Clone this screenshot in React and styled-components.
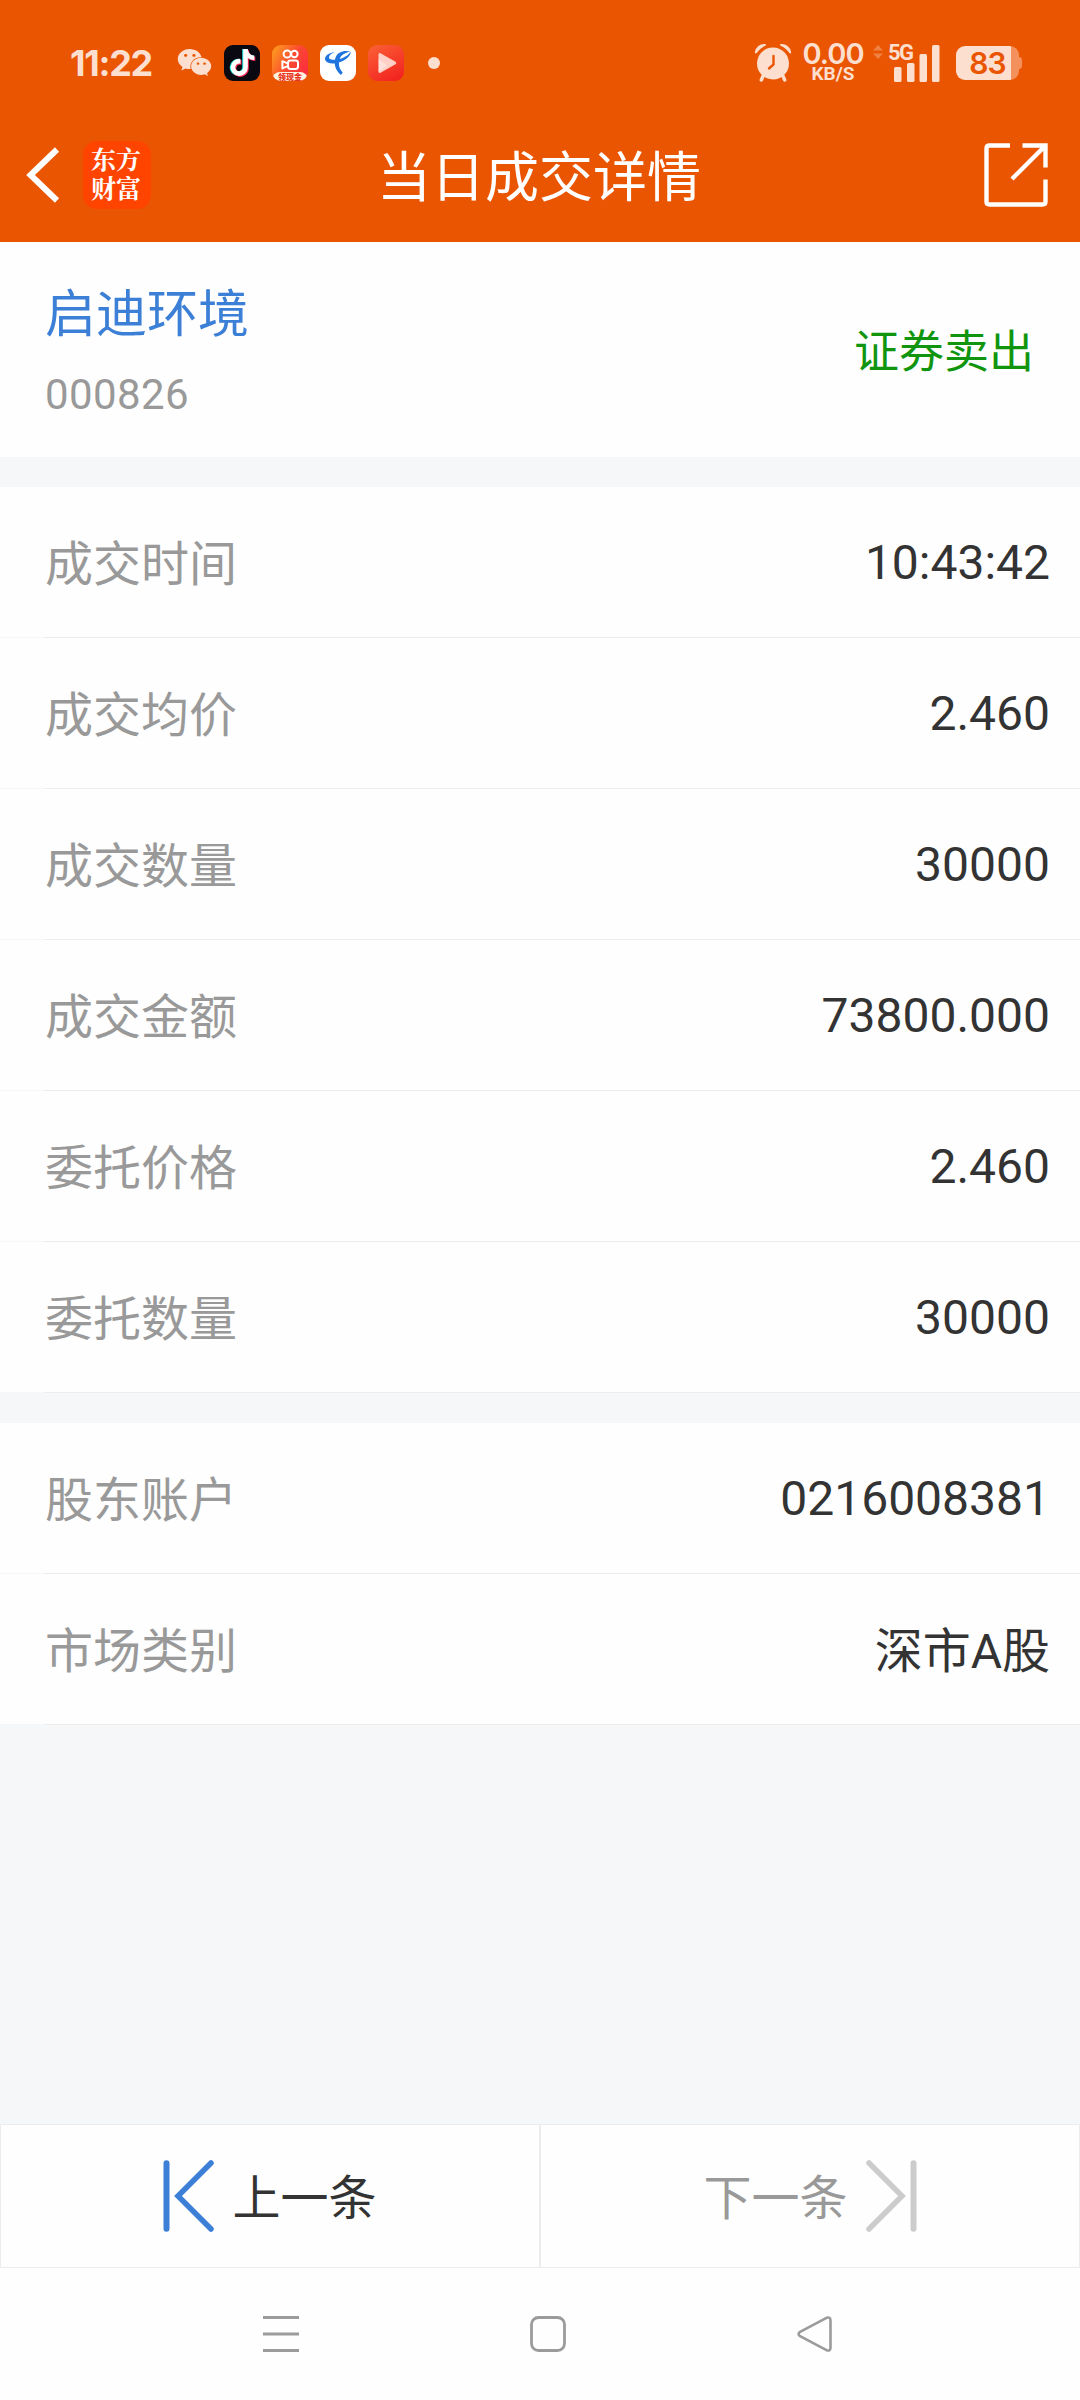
import styled, { createGlobalStyle } from "styled-components";
import { FaWeixin, FaTiktok } from "react-icons/fa";

const GlobalStyle = createGlobalStyle`
  * {
    box-sizing: border-box;
  }
  body {
    margin: 0;
    background: #f6f7f9;
    font-family: Roboto, "Noto Sans CJK SC", sans-serif;
  }
  svg {
    display: block;
    flex-shrink: 0;
  }
`;

const Screen = styled.div`
  width: 1080px;
  height: 2400px;
  display: flex;
  flex-direction: column;
  background: #f6f7f9;
  color: #333333;
`;

const Header = styled.header`
  height: 242px;
  background: #ea5502;
  color: #ffffff;
`;

const StatusBar = styled.div`
  height: 125px;
  padding: 0 57px 0 70px;
  display: flex;
  align-items: center;
  justify-content: space-between;
  color: #fddfcf;
  font-family: Inter, sans-serif;
`;

const StatusGroup = styled.div`
  display: flex;
  align-items: center;
`;

const Clock = styled.span`
  width: 107px;
  font-size: 36px;
  font-weight: 700;
  letter-spacing: -1.3px;
  line-height: 36px;
`;

const AppIcons = styled.div`
  display: flex;
  gap: 12px;
  margin-left: 12px;
`;

const AppTile = styled.div`
  position: relative;
  width: 36px;
  height: 36px;
  border-radius: 9px;
  overflow: hidden;
  background: ${({ $bg }) => $bg};
`;

const TikTokLayer = styled(FaTiktok)`
  position: absolute;
  top: ${({ $y }) => $y}px;
  left: ${({ $x }) => $x}px;
  width: 25px;
  height: 27px;
  color: ${({ $color }) => $color};
`;

const PromoBanner = styled.span`
  position: absolute;
  left: 0;
  right: 0;
  bottom: 0;
  height: 9px;
  border-radius: 8px 8px 0 0;
  background: #fff3e2;
  color: #e8331c;
  font: 900 8px/9px "Noto Sans CJK SC", sans-serif;
  text-align: center;
`;

const MoreDot = styled.i`
  width: 12px;
  height: 12px;
  margin-left: 24px;
  border-radius: 50%;
  background: #fddfcf;
`;

const Speed = styled.div`
  width: 62px;
  margin-left: 10px;
  display: flex;
  flex-direction: column;
  align-items: center;
  font-weight: 600;
`;

const SpeedValue = styled.span`
  font-size: 29px;
  line-height: 22px;
  letter-spacing: -1px;
`;

const SpeedUnit = styled.span`
  font: 700 19px/17px Roboto, sans-serif;
`;

const Signal = styled.div`
  position: relative;
  width: 67px;
  height: 38px;
  margin-left: 9px;
`;

const NetworkType = styled.span`
  position: absolute;
  left: 15px;
  top: 0;
  font: 700 22px/17px Roboto, sans-serif;
  letter-spacing: -1.5px;
`;

const Battery = styled.div`
  position: relative;
  width: 63px;
  height: 34px;
  margin: 1px 4px 0 16px;
  border-radius: 9px;
  display: flex;
  align-items: center;
  justify-content: center;
  background: linear-gradient(90deg, #fddfcf 55px, #f3905c 55px);
  color: #ea5502;
  font-size: 30px;
  font-weight: 600;
  letter-spacing: -1px;
  &::after {
    content: "";
    position: absolute;
    top: 11px;
    right: -3px;
    width: 3px;
    height: 12px;
    border-radius: 0 3px 3px 0;
    background: #f3905c;
  }
`;

const TitleBar = styled.div`
  height: 99px;
  padding: 0 32px 0 26px;
  display: grid;
  grid-template-columns: 1fr auto 1fr;
  align-items: center;
`;

const TitleLeft = styled.div`
  display: flex;
  align-items: center;
  gap: 23px;
`;

const Logo = styled.div`
  width: 68px;
  height: 68px;
  padding: 0 2px 3px 0;
  border-radius: 14px;
  display: flex;
  flex-direction: column;
  align-items: center;
  justify-content: center;
  background: #ff4400;
  font: 700 25px/29px "Noto Serif CJK SC", "Noto Sans CJK SC", sans-serif;
`;

const Title = styled.h1`
  margin: 9px 0 0 4px;
  font-size: 54px;
  font-weight: 400;
  line-height: 70px;
`;

const ShareButton = styled.div`
  justify-self: end;
`;

const Summary = styled.section`
  height: 215px;
  padding: 40px 46px 0 45px;
  display: flex;
  justify-content: space-between;
  background: #fefefe;
`;

const StockName = styled.div`
  font-size: 51px;
  line-height: 66px;
  color: #3c7fd6;
`;

const StockCode = styled.div`
  margin-top: 17px;
  font-size: 42px;
  line-height: 60px;
  letter-spacing: 0.4px;
  color: #999999;
`;

const Side = styled.div`
  margin-top: 41px;
  font-size: 45px;
  line-height: 60px;
  color: #11950f;
`;

const Group = styled.section`
  margin-top: 30px;
`;

const Row = styled.div`
  height: 151px;
  padding: 4px 30px 0 45px;
  display: flex;
  align-items: center;
  justify-content: space-between;
  font-size: 48px;
  line-height: 70px;
  /* the hairline starts where the label does */
  background: linear-gradient(#ececec, #ececec) 45px 100% / 1035px 1px no-repeat,
    linear-gradient(#fefefe, #fefefe) 0 0 / 100% 150px no-repeat;
`;

const Label = styled.span`
  color: #999999;
`;

const Value = styled.span`
  padding-bottom: ${({ $cjk }) => ($cjk ? 0 : 3)}px;
  color: #333333;
`;

const Pager = styled.div`
  margin-top: auto;
  display: grid;
  grid-template-columns: 1fr 1fr;
`;

const PagerButton = styled.div`
  height: 144px;
  border: 1px solid #ececec;
  display: flex;
  align-items: center;
  justify-content: center;
  gap: 18px;
  background: #fefefe;
  font-size: 48px;
  line-height: 70px;
  color: ${({ $disabled }) => ($disabled ? "#999999" : "#333333")};
`;

const PagerText = styled.span`
  padding-top: 5px;
`;

const NavBar = styled.nav`
  height: 132px;
  padding: 0 247px 0 263px;
  display: flex;
  align-items: center;
  justify-content: space-between;
  background: #fefefe;
`;

const tradeRows = [
  { label: "成交时间", value: "10:43:42" },
  { label: "成交均价", value: "2.460" },
  { label: "成交数量", value: "30000" },
  { label: "成交金额", value: "73800.000" },
  { label: "委托价格", value: "2.460" },
  { label: "委托数量", value: "30000" },
];

const accountRows = [
  { label: "股东账户", value: "0216008381" },
  { label: "市场类别", value: "深市A股", cjk: true },
];

const KuaishouIcon = () => (
  <svg width="36" height="36" viewBox="0 0 36 36" fill="none" stroke="#fff" strokeWidth="2">
    <circle cx="15.2" cy="9" r="3.6" />
    <circle cx="22.4" cy="9" r="3.2" />
    <rect x="16" y="15.5" width="10" height="8.5" rx="2.4" />
    <path d="M15.5 18.4 10.4 16.2v7.2l5.1-2.2" strokeLinejoin="round" />
  </svg>
);

const TelecomIcon = () => (
  <svg width="36" height="36" viewBox="0 0 36 36" fill="#1f74e0">
    <path d="M15 7C8 8 4 11.500 5.200 15c1.400 4 9 4.500 15.800 1.700C27.500 14 31 10 30.600 6.500c-1.600 3.300-6 6-11 7.500-4.600 1.400-10.400 1-10.600-1.300C8.800 10.500 11 8.500 15 7Z" />
    <path d="M30.600 6.500C24 5 17.500 6.500 15.400 13c-2 6 .2 12.500 5.600 17l1.700-2.600c-3.600-3.400-4.600-8.800-3-13.400 1.400-4 4.900-6.200 10.900-7.500Z" />
  </svg>
);

const PlayIcon = () => (
  <svg width="36" height="36" viewBox="0 0 36 36">
    <path d="M12.500 8.200 27.500 16.800q1.800 1.200 0 2.400L12.500 27.800q-2 .8-2-1.400V9.600q0-2.200 2-1.400Z" fill="#ffd0c6" />
    <path d="M10.500 14 19 20.500 10.500 27Z" fill="#fff" fillOpacity=".35" />
  </svg>
);

const AlarmIcon = () => (
  <svg width="38" height="39" viewBox="0 0 38 39" fill="#fddfcf">
    <path d="M.8 9.500A9.500 9.500 0 0 1 11.500 1q.8.800 0 1.800Q6 5 2.600 10Q1.200 11 .8 9.500Z" />
    <path d="M37.200 9.500A9.500 9.500 0 0 0 26.500 1q-.8.800 0 1.800Q32 5 35.400 10Q36.800 11 37.200 9.500Z" />
    <path d="m9.500 32-2.200 5M28.500 32l2.200 5" stroke="#fddfcf" strokeWidth="3.400" strokeLinecap="round" />
    <circle cx="19" cy="20.500" r="16" />
    <path d="M19.500 13v8.500l-4.500 4" fill="none" stroke="#ea5502" strokeWidth="2.400" strokeLinecap="round" />
  </svg>
);

const SignalIcon = () => (
  <svg width="67" height="38" viewBox="0 0 67 38" fill="#fddfcf">
    <path d="M0 6.500 5 1l5 5.500ZM0 9.500 5 15l5-5.500Z" fillOpacity=".32" />
    <rect x="21" y="23" width="7.500" height="15" rx="1.500" />
    <rect x="34" y="19" width="7.500" height="19" rx="1.500" />
    <rect x="46.500" y="10" width="7.500" height="28" rx="1.500" />
    <rect x="59" y="1" width="7.500" height="37" rx="1.500" />
  </svg>
);

const BackIcon = () => (
  <svg width="34" height="56" viewBox="0 0 34 56" fill="none" stroke="#fff" strokeWidth="6">
    <path d="M31 2.500 4.500 28 31 53.500" />
  </svg>
);

const ShareIcon = () => (
  <svg width="64" height="64" viewBox="0 0 64 64" fill="none" stroke="#fff" strokeWidth="4.400">
    <path d="M26 2.500H5.500q-3 0-3 3v53q0 3 3 3h53q3 0 3-3V36.500M38.500 2.500h23v22M61 3 28 36" />
  </svg>
);

const StepIcon = ({ color, flip }) => (
  <svg width="51" height="72" viewBox="0 0 51 72" fill="none" stroke={color} strokeLinecap="round">
    <g transform={flip ? "translate(51 0) scale(-1 1)" : undefined}>
      <path d="M3.500 3.200v65.600" strokeWidth="6" />
      <path d="M48 3 15 36l33 33" strokeWidth="5.500" />
    </g>
  </svg>
);

const RowList = ({ rows }) => (
  <Group>
    {rows.map(({ label, value, cjk }) => (
      <Row key={label}>
        <Label>{label}</Label>
        <Value $cjk={cjk}>{value}</Value>
      </Row>
    ))}
  </Group>
);

const App = () => {
  return (
    <Screen>
      <GlobalStyle />
      <Header>
        <StatusBar>
          <StatusGroup>
            <Clock>11:22</Clock>
            <FaWeixin size={35} />
            <AppIcons>
              <AppTile $bg="#0a0912">
                <TikTokLayer $x={5} $y={4} $color="#25e9e4" />
                <TikTokLayer $x={7} $y={5} $color="#fb2c58" />
                <TikTokLayer $x={6} $y={4.5} $color="#ffffff" />
              </AppTile>
              <AppTile $bg="linear-gradient(120deg, #fda51c, #fd4a32 50%, #fb2541)">
                <KuaishouIcon />
                <PromoBanner>领现金</PromoBanner>
              </AppTile>
              <AppTile $bg="#ffffff">
                <TelecomIcon />
              </AppTile>
              <AppTile $bg="linear-gradient(150deg, #fb6236, #f11d1e)">
                <PlayIcon />
              </AppTile>
            </AppIcons>
            <MoreDot />
          </StatusGroup>
          <StatusGroup>
            <AlarmIcon />
            <Speed>
              <SpeedValue>0.00</SpeedValue>
              <SpeedUnit>KB/S</SpeedUnit>
            </Speed>
            <Signal>
              <SignalIcon />
              <NetworkType>5G</NetworkType>
            </Signal>
            <Battery>83</Battery>
          </StatusGroup>
        </StatusBar>
        <TitleBar>
          <TitleLeft>
            <BackIcon />
            <Logo>
              <span>东方</span>
              <span>财富</span>
            </Logo>
          </TitleLeft>
          <Title>当日成交详情</Title>
          <ShareButton>
            <ShareIcon />
          </ShareButton>
        </TitleBar>
      </Header>

      <Summary>
        <div>
          <StockName>启迪环境</StockName>
          <StockCode>000826</StockCode>
        </div>
        <Side>证券卖出</Side>
      </Summary>

      <RowList rows={tradeRows} />
      <RowList rows={accountRows} />

      <Pager>
        <PagerButton>
          <StepIcon color="#3c7fd6" />
          <PagerText>上一条</PagerText>
        </PagerButton>
        <PagerButton $disabled>
          <PagerText>下一条</PagerText>
          <StepIcon color="#cccccc" flip />
        </PagerButton>
      </Pager>

      <NavBar>
        <svg width="36" height="36" fill="none" stroke="#9b9b9b" strokeWidth="3">
          <path d="M0 1.500h36M0 18h36M0 34.500h36" />
        </svg>
        <svg width="36" height="36" fill="none" stroke="#9b9b9b" strokeWidth="2.800">
          <rect x="1.500" y="1.500" width="33" height="33" rx="7" />
        </svg>
        <svg width="36" height="36" fill="none" stroke="#9b9b9b" strokeWidth="2.600" strokeLinejoin="round">
          <path d="M2.600 16.200 29.500 1.800q4-1.400 4 2.600v27.200q0 4-4 2.600L2.600 19.800q-2-1.800 0-3.600Z" />
        </svg>
      </NavBar>
    </Screen>
  );
};

export default App;
